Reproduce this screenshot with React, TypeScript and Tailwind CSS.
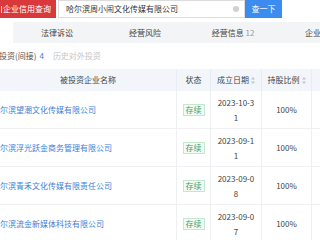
import React from "react";

const rows = [
  { name: "哈尔滨望潮文化传媒有限公司", date: "2023-10-31", pct: "100%" },
  { name: "哈尔滨浮光跃金商务管理有限公司", date: "2023-09-11", pct: "100%" },
  { name: "哈尔滨青禾文化传媒有限责任公司", date: "2023-09-08", pct: "100%" },
  { name: "哈尔滨流金新媒体科技有限公司", date: "2023-09-07", pct: "100%" },
];

function SortIcon() {
  return (
    <svg width="4" height="7" viewBox="0 0 4 7" className="ml-[2px] inline-block">
      <path d="M2 0 L4 2.5 L0 2.5 Z" fill="#c0c4cc" />
      <path d="M2 7 L4 4.5 L0 4.5 Z" fill="#c0c4cc" />
    </svg>
  );
}

export default function App() {
  return (
    <div
      className="w-[320px] h-[240px] overflow-hidden bg-white text-[8px] leading-none"
      style={{ fontFamily: '"Noto Sans CJK SC", "Noto Sans", sans-serif' }}
    >
      {/* top bar */}
      <div className="flex h-[18px] items-stretch">
        <div className="w-[56px] bg-[#d9393b] flex items-center pl-[1px] text-white text-[8px] whitespace-nowrap overflow-hidden">
          <span className="w-[1px] h-[7px] bg-white/80 mr-[1px]" />
          <span>企业信用查询</span>
        </div>
        <div className="ml-[2px] w-[187px] border border-[#dcdcdc] flex items-center pl-[7px] pr-[5px] text-[#333]">
          <span className="flex-1">哈尔滨周小闹文化传媒有限公司</span>
          <span className="w-[6px] h-[6px] rounded-full bg-[#d0d0d0]" />
        </div>
        <div className="w-[37px] bg-[#3c8cf0] text-white flex items-center justify-center">查一下</div>
      </div>

      {/* tabs */}
      <div className="mt-[4px] ml-[13px] h-[21px] bg-[#f3f4f6] flex items-center whitespace-nowrap text-[#444]">
        <div className="w-[88px] shrink-0 text-center">法律诉讼</div>
        <div className="w-[88px] shrink-0 text-center">经营风险</div>
        <div className="w-[88px] shrink-0 text-center">
          经营信息 <span className="text-[#999]">12</span>
        </div>
        <div className="w-[88px] shrink-0 text-center">企业发展</div>
      </div>

      {/* sub title */}
      <div className="mt-[8px] h-[10px] flex items-center whitespace-nowrap">
        <span className="text-[#555] -ml-[1px]">投资(间接)</span>
        <span className="ml-[3px] text-[#3c7fd9]">4</span>
        <span className="ml-[9px] text-[#c4c4c4]">历史对外投资</span>
      </div>

      {/* table */}
      <div className="mt-[8px] grid grid-cols-[177px_34px_51px_50px_20px] text-[#444]">
        <div className="h-[22px] bg-[#f2f6fb] flex items-center justify-center border-r border-[#e8edf3]">
          被投资企业名称
        </div>
        <div className="h-[22px] bg-[#f2f6fb] flex items-center justify-center border-r border-[#e8edf3]">
          状态
        </div>
        <div className="h-[22px] bg-[#f2f6fb] flex items-center justify-center border-r border-[#e8edf3] whitespace-nowrap">
          成立日期<SortIcon />
        </div>
        <div className="h-[22px] bg-[#f2f6fb] flex items-center justify-center border-r border-[#e8edf3] whitespace-nowrap">
          持股比例<SortIcon />
        </div>
        <div className="h-[22px] bg-[#f2f6fb]" />

        {rows.map((r) => (
          <React.Fragment key={r.name}>
            <div className="h-[38px] border-b border-r border-[#eef0f3] flex items-center overflow-hidden whitespace-nowrap">
              <span className="-ml-[8px] text-[#3f7fd6]">{r.name}</span>
            </div>
            <div className="h-[38px] border-b border-r border-[#eef0f3] flex items-center justify-center">
              <span className="border border-[#c3e8cf] bg-[#f2fbf5] text-[#3aa26a] px-[2px] py-[1px] text-[8px]">
                存续
              </span>
            </div>
            <div className="h-[38px] border-b border-r border-[#eef0f3] flex items-center justify-center px-[5px]">
              <span className="text-center break-all leading-[15px] w-[41px]">{r.date}</span>
            </div>
            <div className="h-[38px] border-b border-r border-[#eef0f3] flex items-center justify-center">
              {r.pct}
            </div>
            <div className="h-[38px] border-b border-[#eef0f3]" />
          </React.Fragment>
        ))}
      </div>
    </div>
  );
}
